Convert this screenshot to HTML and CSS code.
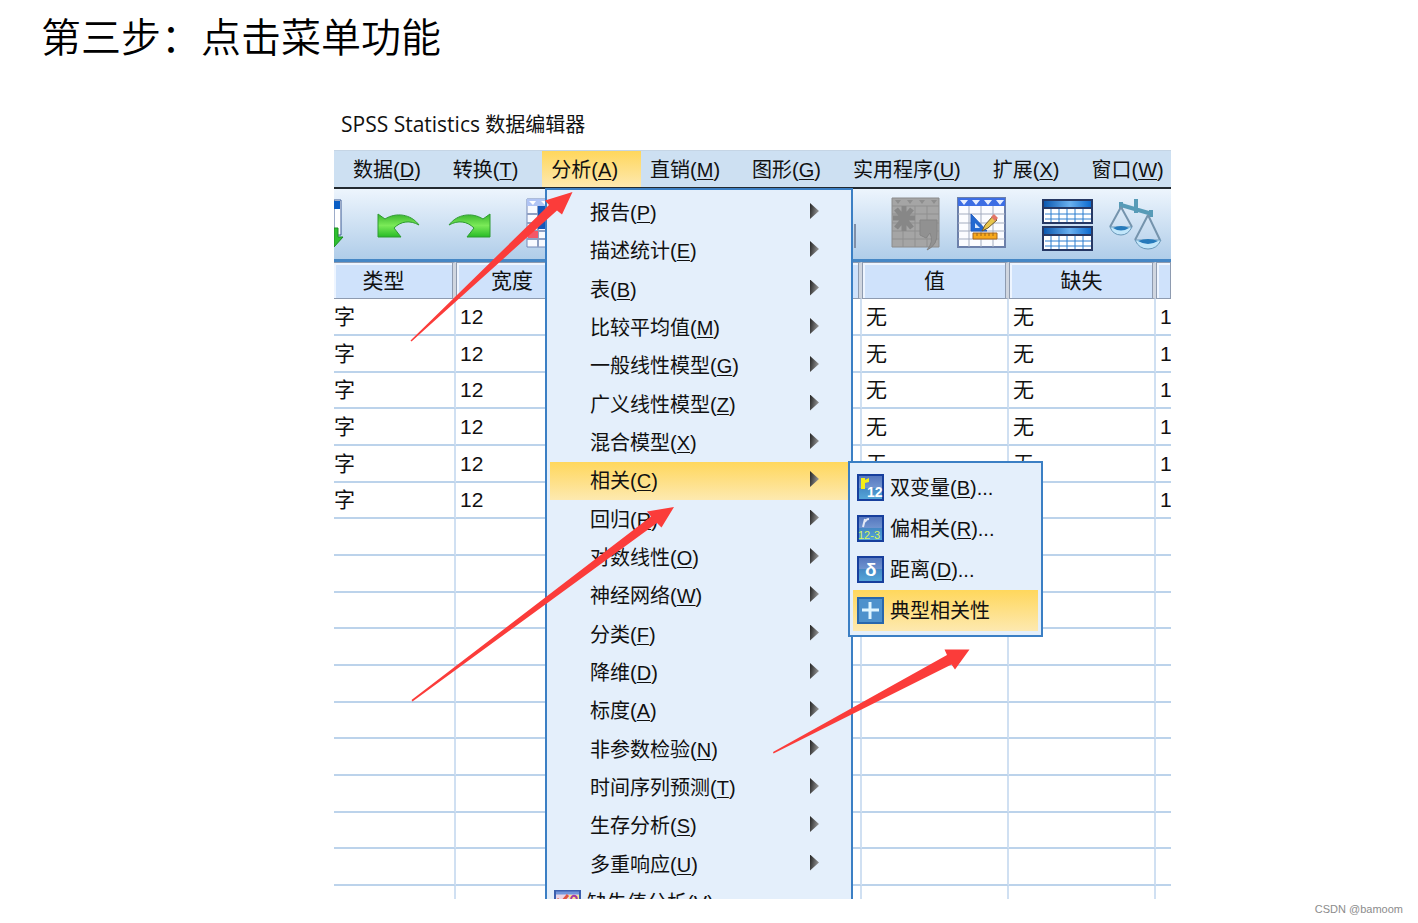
FILE: index.html
```html
<!DOCTYPE html>
<html lang="zh-CN">
<head>
<meta charset="utf-8">
<title>第三步：点击菜单功能</title>
<link rel="stylesheet" href="styles.css">
</head>
<body>
<main class="page">
<h1 class="title">第三步：点击菜单功能</h1>
<section class="shot">
<h2 class="caption"><span class="product">SPSS Statistics</span> 数据编辑器</h2>
<div class="window">
<nav class="menubar">
<button>数据(<u>D</u>)</button><button>转换(<u>T</u>)</button><button class="on">分析(<u>A</u>)</button><button>直销(<u>M</u>)</button><button>图形(<u>G</u>)</button><button>实用程序(<u>U</u>)</button><button>扩展(<u>X</u>)</button><button>窗口(<u>W</u>)</button>
</nav>
<div class="toolbar">
<div class="tools tools-left">
<button aria-label="导入"><svg width="10" height="54" viewBox="0 0 10 54"><path d="M0 3H7V38H0z" fill="#fff" stroke="#3d5a94"/><path d="M0 4H6V12H0z" fill="#0b5ec4"/><path d="M0 31H4V40H9L0 50z" fill="#2fc02f" stroke="#1c8c24"/></svg></button>
<button aria-label="撤消"><svg width="44" height="54" viewBox="0 0 44 54"><defs><linearGradient id="g" x1="0" y1="0" x2="0" y2="1"><stop offset="0" stop-color="#38b52c"/><stop offset=".5" stop-color="#7bea58"/><stop offset="1" stop-color="#27bb27"/></linearGradient></defs><path d="M2 17L9 22C20 15 35 17 43 28C34 23 25 24 18 31L25 40H2z" fill="url(#g)" stroke="#2e9a32"/></svg></button>
<button aria-label="重做"><svg width="44" height="54" viewBox="0 0 44 54"><path d="M42 17L35 22C24 15 9 17 1 28C10 23 19 24 26 31L19 40H42z" fill="url(#g)" stroke="#2e9a32"/></svg></button>
<button class="jump" aria-label="转到个案"><svg width="48" height="54" viewBox="0 0 48 54"><path d="M1 2H47V50H1z" fill="#f8faff" stroke="#7489b8"/><path d="M1 2H47V9H1z" fill="#b0c4f4"/><path d="M3 4h7l-3 4zM15 4h7l-3 4z" fill="#fff"/><path d="M1 17H47M1 26H47M1 34H47M1 42H47M12 9V50M24 9V50M36 9V50" stroke="#8e9fc2" stroke-width="2"/><path d="M12 9h12v23H12z" fill="#1557b8"/><path d="M2 34h10v7H2z" fill="#f35768"/></svg></button>
</div>
<div class="tools tools-right">
<button class="sep" aria-label="查找"><svg width="2" height="54" viewBox="0 0 2 54"><path d="M0 27h2v24H0z" fill="#7f8fa8"/></svg></button>
<button class="t1" aria-label="插入个案" disabled><svg width="50" height="54" viewBox="0 0 50 54"><path d="M1 1H48V50H1z" fill="#a5a5a5" stroke="#8c8c8c"/><path d="M1 9H48M1 17H48M1 26H48M1 34H48M1 42H48M12 9V50M24 9V50M36 9V50" stroke="#8f8f8f"/><path d="M4 3h6l-3 4zM16 3h6l-3 4zM28 3h6l-3 4zM40 3h6l-3 4z" fill="#8e8e8e"/><path d="M13 9V34M2 21H24M5 12L21 31M21 12L5 31" stroke="#878787" stroke-width="5"/><path d="M29 23H46V35Q47 48 36 53Q43 45 39 36L35 41L29 38z" fill="#919191" stroke="#858585"/></svg></button>
<button class="t2" aria-label="定义变量"><svg width="50" height="54" viewBox="0 0 50 54"><path d="M1 1H48V50H1z" fill="#fbfcff" stroke="#6c80aa" stroke-width="2"/><path d="M1 1H48V9H1z" fill="#3d6ee4"/><path d="M3 3h8l-4 5zM15 3h8l-4 5zM27 3h8l-4 5zM39 3h8l-4 5z" fill="#e5edff"/><path d="M1 17H48M1 26H48M1 34H48M1 42H48M12 9V50M24 9V50M36 9V50" stroke="#a3acbf"/><path d="M14 17L30 34H14z" fill="#2369d1" stroke="#205cc0"/><path d="M18 26L23 31H18z" fill="#d8e6fc"/><path d="M25 34L28 28L36 19L40 23L31 31z" fill="#e8c64c" stroke="#6d572b"/><path d="M34 20L37 17L41 21L38 24z" fill="#e27668"/><path d="M16 36H40V42H16z" fill="#f7a81b" stroke="#a7661f"/><path d="M20 36v3M24 36v3M28 36v3M32 36v3M36 36v3" stroke="#9b641d"/></svg></button>
<button class="t3" aria-label="拆分文件"><svg width="52" height="54" viewBox="0 0 52 54"><defs><linearGradient id="b"><stop stop-color="#0755ae"/><stop offset=".55" stop-color="#6bb1ef"/><stop offset="1" stop-color="#0867cd"/></linearGradient></defs><path d="M1 3H50V26H1zM1 30H50V53H1z" fill="#fff"/><path d="M1 3H50V11H1zM1 30H50V38H1z" fill="url(#b)"/><path d="M3 17H49M3 22H49M3 44H49M3 49H49M9 12V26M17 12V26M25 12V26M33 12V26M41 12V26M9 39V53M17 39V53M25 39V53M33 39V53M41 39V53" stroke="#2d7fd0"/><path d="M1 3H50V26H1zM1 11H50M1 30H50V53H1zM1 38H50" fill="none" stroke="#263864" stroke-width="2"/></svg></button>
<button class="t4" aria-label="个案加权"><svg width="54" height="54" viewBox="0 0 54 54"><path d="M13 8L44 17M28 2V16M13 5V12M43 13V20" stroke="#579bb7" stroke-width="4"/><path d="M13 10L2 30M13 10L24 30M40 18L27 43M40 18L52 43" fill="none" stroke="#7594ad" stroke-width="2"/><path d="M2 30H24Q20 38 13 38Q5 38 2 30zM27 43H53Q49 52 40 52Q31 52 27 43z" fill="#c2e6fa" stroke="#6897b8"/><path d="M5 31Q13 27 21 31Q13 36 5 31zM30 44Q40 40 50 44Q40 50 30 44z" fill="#267abb"/></svg></button>
</div>
</div>
<table class="grid">
<colgroup><col class="c1"><col class="c2"><col><col class="c4"><col class="c4"><col class="c6"></colgroup>
<thead><tr><th class="type">类型</th><th>宽度</th><th></th><th>值</th><th>缺失</th><th></th></tr></thead>
<tbody>
<tr><td>字</td><td>12</td><td></td><td>无</td><td>无</td><td>1</td></tr>
<tr><td>字</td><td>12</td><td></td><td>无</td><td>无</td><td>1</td></tr>
<tr><td>字</td><td>12</td><td></td><td>无</td><td>无</td><td>1</td></tr>
<tr><td>字</td><td>12</td><td></td><td>无</td><td>无</td><td>1</td></tr>
<tr><td>字</td><td>12</td><td></td><td>无</td><td>无</td><td>1</td></tr>
<tr><td>字</td><td>12</td><td></td><td></td><td></td><td>1</td></tr>
<tr><td></td><td></td><td></td><td></td><td></td><td></td></tr>
<tr><td></td><td></td><td></td><td></td><td></td><td></td></tr>
<tr><td></td><td></td><td></td><td></td><td></td><td></td></tr>
<tr><td></td><td></td><td></td><td></td><td></td><td></td></tr>
<tr><td></td><td></td><td></td><td></td><td></td><td></td></tr>
<tr><td></td><td></td><td></td><td></td><td></td><td></td></tr>
<tr><td></td><td></td><td></td><td></td><td></td><td></td></tr>
<tr><td></td><td></td><td></td><td></td><td></td><td></td></tr>
<tr><td></td><td></td><td></td><td></td><td></td><td></td></tr>
<tr><td></td><td></td><td></td><td></td><td></td><td></td></tr>
<tr class="cut"><td></td><td></td><td></td><td></td><td></td><td></td></tr>
</tbody>
</table>
<div class="menu">
<button>报告(<u>P</u>)</button>
<button>描述统计(<u>E</u>)</button>
<button>表(<u>B</u>)</button>
<button>比较平均值(<u>M</u>)</button>
<button>一般线性模型(<u>G</u>)</button>
<button>广义线性模型(<u>Z</u>)</button>
<button>混合模型(<u>X</u>)</button>
<button class="on">相关(<u>C</u>)</button>
<button>回归(<u>R</u>)</button>
<button>对数线性(<u>O</u>)</button>
<button>神经网络(<u>W</u>)</button>
<button>分类(<u>F</u>)</button>
<button>降维(<u>D</u>)</button>
<button>标度(<u>A</u>)</button>
<button>非参数检验(<u>N</u>)</button>
<button>时间序列预测(<u>T</u>)</button>
<button>生存分析(<u>S</u>)</button>
<button>多重响应(<u>U</u>)</button>
<button class="with-icon"><svg width="27" height="27" viewBox="0 0 27 27"><path d="M1 1H26V26H1z" fill="#e9d5e6" stroke="#3c5fae" stroke-width="2"/><path d="M2 3H25" stroke="#7295da" stroke-width="3"/><path d="M3 9L7 13L14 5" fill="none" stroke="#e05543" stroke-width="3"/><path d="M15 5h10v20H15z" fill="#f6e58f"/><path d="M17 9Q18 5 21 6Q25 8 20 12V14" fill="none" stroke="#a53aa3" stroke-width="2"/></svg>缺失值分析(<u>V</u>)</button>
</div>
<div class="submenu">
<button><svg width="27" height="27" viewBox="0 0 27 27"><defs><linearGradient id="i" x1="0" y1="0" x2="0" y2="1"><stop stop-color="#5374bd"/><stop offset=".5" stop-color="#7195d0"/><stop offset=".5" stop-color="#4589c5"/><stop offset="1" stop-color="#56a8d9"/></linearGradient></defs><path d="M1 1H26V26H1z" fill="url(#i)" stroke="#173f9d" stroke-width="2"/><path d="M4 4H8V6L12 4V8L8 9V15H4z" fill="#f4ee18"/><text x="10" y="23" class="glyph">12</text></svg>双变量(<u>B</u>)...</button>
<button><svg width="27" height="27" viewBox="0 0 27 27"><path d="M1 1H26V26H1z" fill="url(#i)" stroke="#173f9d" stroke-width="2"/><path d="M6 12L8 4M8 7Q9 4 12 4" fill="none" stroke="#e4e9f5" stroke-width="2"/><text x="1" y="24" class="glyph small">12-3</text></svg>偏相关(<u>R</u>)...</button>
<button><svg width="27" height="27" viewBox="0 0 27 27"><path d="M1 1H26V26H1z" fill="url(#i)" stroke="#173f9d" stroke-width="2"/><text x="8" y="20" class="glyph delta">δ</text></svg>距离(<u>D</u>)...</button>
<button class="on"><svg width="27" height="27" viewBox="0 0 27 27"><path d="M1 1H26V26H1z" fill="#4d91cc" stroke="#2867ad" stroke-width="2"/><path d="M5 13H22M13 5V22" stroke="#dff5ff" stroke-width="3"/></svg>典型相关性</button>
</div>
<svg class="arrows" width="837" height="749" viewBox="334 150 837 749" fill="#fb3c3a" aria-hidden="true"><path d="M410.500 340.500L549 205L545 200.500L572.500 192L562 214.500L557 210.500L411.500 341.500z"/><path d="M411.500 700L651 516.500L647 511.500L674 507L661.500 527.500L657 523L412.500 701.500z"/><path d="M773 752L947 655L944.500 649.500L969.500 649.500L955 669.500L951.500 664.500L773.500 753.500z"/></svg>
</div>
</section>
<p class="mark">CSDN @bamoom</p>
</main>
</body>
</html>
```
FILE: styles.css
```css
* { box-sizing: border-box; }
body { margin: 0; background: #fff; color: #111; font: 20px/24px "Liberation Sans", "Noto Sans CJK SC", sans-serif; }
h1, h2, p { margin: 0; }
button { font: inherit; color: inherit; border: 0; padding: 0; background: none; text-align: left; white-space: nowrap; }
u { text-underline-offset: 2px; text-decoration-thickness: 1px; }
svg { display: block; flex: none; }

.title { padding: 5px 41px 0; font: 350 40px/60px "Noto Sans CJK SC", sans-serif; color: #000; }
.shot { margin: 47px 247px 0 334px; }
.caption { padding-left: 7px; height: 38px; font: 400 20px/24px "Open Sans", "Noto Sans CJK SC", sans-serif; white-space: nowrap; }
.product { font-size: 21px; }
.window { position: relative; overflow: hidden; }

.menubar { display: flex; height: 39px; padding-left: 10px; background: #cde0f2; border-top: 1px solid #c5d5e5; border-bottom: 2px solid #222a30; }
.menubar button { padding: 2px 23px 0 9px; }
.menubar .on { margin-left: 1px; }
.on, .menubar .on { background: linear-gradient(#ffd75c, #fde9b0); }

.toolbar { display: flex; justify-content: space-between; height: 73px; padding-top: 8px; background: linear-gradient(#edf5fd, #b0cde9); border-bottom: 3px solid #4687c5; }
.tools { display: flex; align-items: flex-start; }
.tools-left { gap: 28px; padding-left: 2px; margin-left: -2px; }
.tools-left button:nth-child(2) { margin-left: 4px; }
.tools-left .jump { margin-left: 6px; }
.tools-right { padding-right: 9px; }
.t1 { margin-left: 35px; }
.t2 { margin-left: 16px; }
.t3 { margin-left: 35px; }
.t4 { margin-left: 14px; }

.grid { width: 100%; table-layout: fixed; border-collapse: separate; border-spacing: 0; background: #fff; }
.c1 { width: 122px; }
.c2 { width: 114px; }
.c4 { width: 147px; }
.c6 { width: 15px; }
.grid th { height: 37px; padding: 0; font-weight: 400; font-size: 21px; background: #cfe2fb; border: 1px solid #8e9bb0; border-right: 3px solid #d0d6e0; box-shadow: inset -1px 0 #8e9bb0, inset 2px 2px #eef5ff; }
.grid th.type { border-left: 0; padding-right: 20px; }
.grid td { height: 37px; padding: 0 0 0 4px; border-right: 2px solid #d0e0f2; border-bottom: 2px solid #bcd3eb; font-size: 21px; white-space: nowrap; overflow: hidden; }
.grid tr > :last-child { border-right: 0; }
.grid td:first-child { padding-left: 0; }
.grid tbody tr:nth-child(3n) td { height: 36px; }
.grid .cut td { height: 13px; border-bottom: 0; }

.menu { position: absolute; left: 211px; top: 38px; bottom: 0; width: 308px; padding: 4px 3px 0; display: flex; flex-direction: column; overflow: hidden; background: #e4effb; border: 2px solid #3b7fc4; border-bottom: 0; }
.menu button { flex: none; height: 38px; padding: 0 29px 0 40px; display: flex; align-items: center; }
.menu button:nth-child(3n) { height: 39px; }
.menu button::after { content: ""; margin: 0 0 4px auto; width: 9px; height: 16px; background: linear-gradient(100deg, #222, #aaa); clip-path: polygon(0 0, 100% 50%, 0 100%); }
.menu .with-icon { padding-left: 4px; }
.menu .with-icon svg { margin-right: 6px; }
.menu .with-icon::after { content: none; }

.submenu { position: absolute; left: 514px; top: 311px; width: 195px; padding: 4px 3px; display: flex; flex-direction: column; background: #e4effb; border: 2px solid #3b7fc4; }
.submenu button { height: 41px; padding-left: 4px; display: flex; align-items: center; }
.submenu button svg { margin-right: 6px; }
.glyph { font: 700 14px "Liberation Sans", sans-serif; fill: #fff; }
.small { font-size: 11px; font-weight: 400; fill: #d9f45c; }
.delta { font-size: 19px; }

.arrows { position: absolute; left: 0; top: 0; }
.mark { padding: 3px 15px 0; text-align: right; font-size: 11px; line-height: 14px; color: #8c8c8c; }
```
